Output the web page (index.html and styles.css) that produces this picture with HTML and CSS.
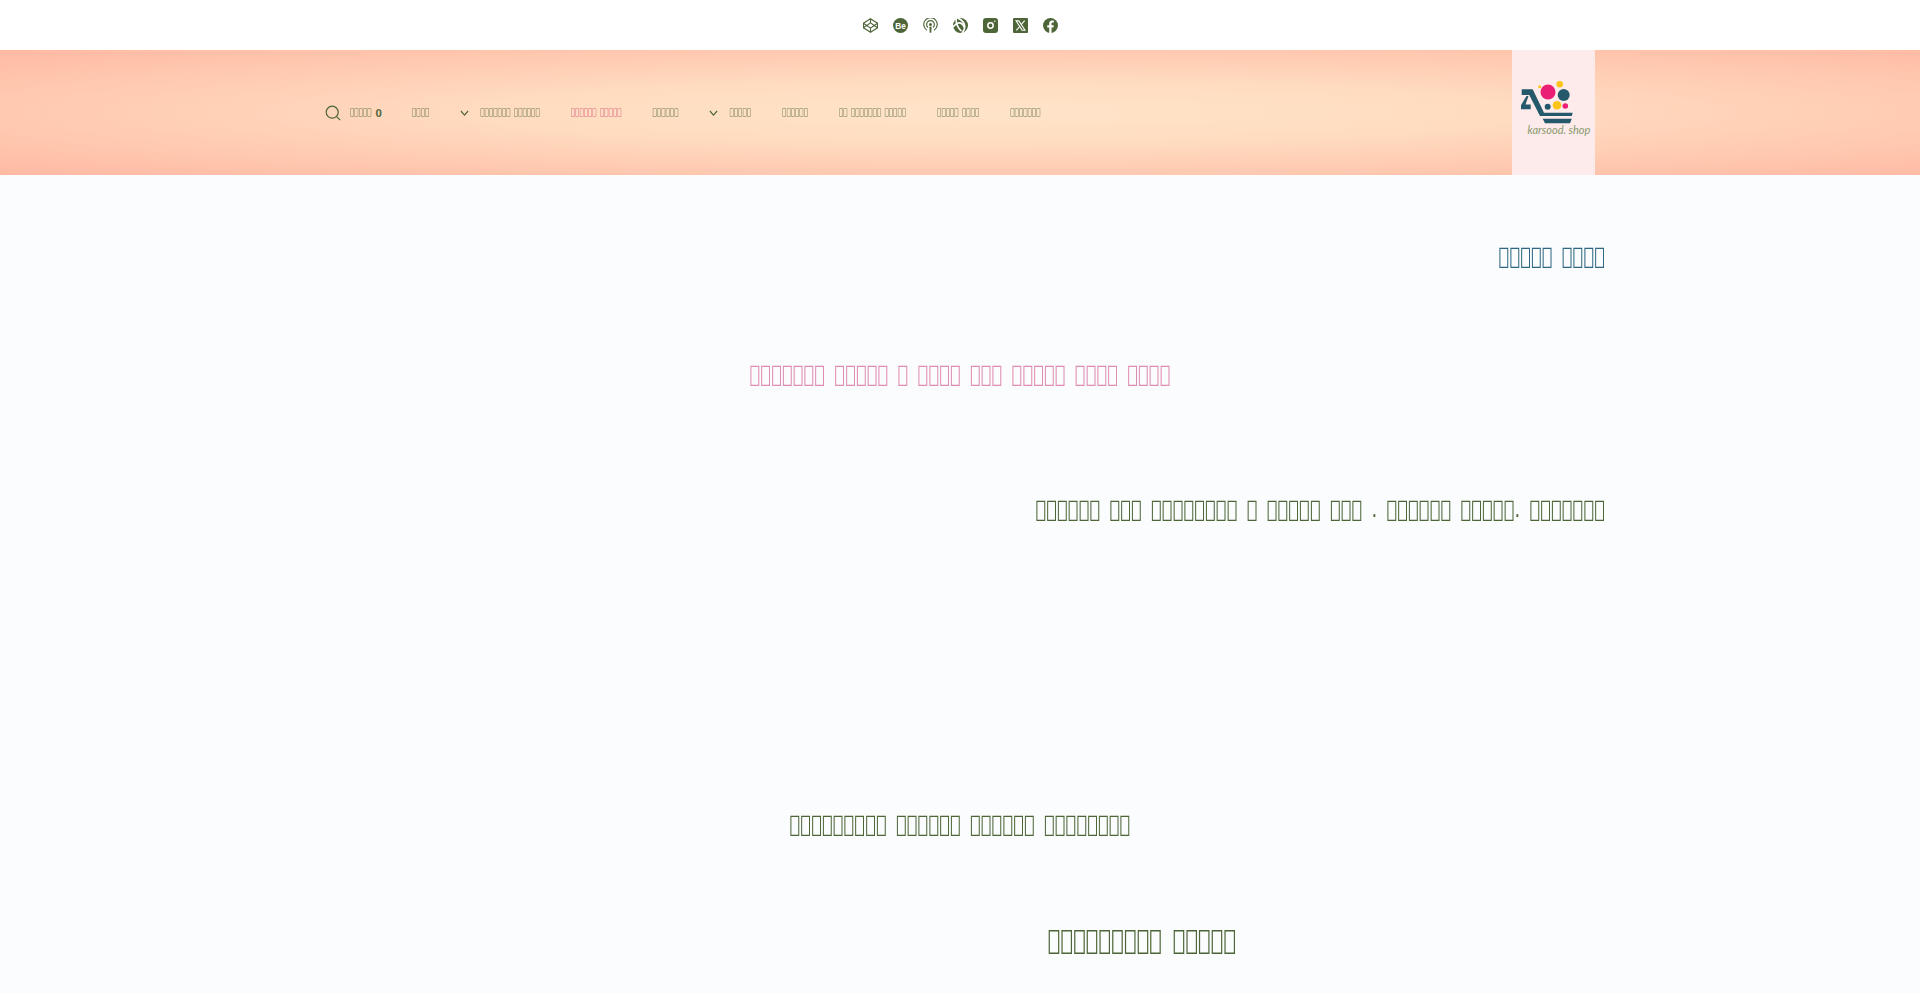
FILE: index.html
```html
<!DOCTYPE html>
<html lang="fa" dir="rtl">
  <head>
    <meta charset="UTF-8" />
    <meta name="viewport" content="width=device-width, initial-scale=1.0" />
    <title>karsood.shop</title>
    <link rel="stylesheet" href="styles.css">
  </head>
  <body>
    <div class="top-bar">
      <a class="social-icon" href="#">
        <svg viewBox="0 0 20 20"><circle cx="10" cy="10" r="10" fill="#4d6537"/><path d="M11.400 20v-7.500h2.500l.5-3h-3V7.700c0-.9.400-1.600 1.700-1.600h1.400V3.500c-.6-.1-1.400-.2-2.200-.2-2.500 0-4 1.500-4 4v2.200H5.700v3h2.600V20z" fill="#fff"/></svg>
      </a>
      <a class="social-icon" href="#">
        <svg viewBox="0 0 20 20"><rect width="20" height="20" rx="1.500" fill="#4d6537"/><path d="M4 3.800h3.800l8.200 12.400h-3.800z" fill="none" stroke="#fff" stroke-width="1.400"/><path d="M15.500 3.500 10.800 9M9.200 11 4.500 16.500" fill="none" stroke="#fff" stroke-width="1.500"/></svg>
      </a>
      <a class="social-icon" href="#">
        <svg viewBox="0 0 20 20"><rect width="20" height="20" rx="4" fill="#4d6537"/><circle cx="10" cy="10" r="3.600" fill="none" stroke="#fff" stroke-width="2"/><circle cx="15.700" cy="4.300" r="1" fill="#fff"/></svg>
      </a>
      <a class="social-icon" href="#">
        <svg viewBox="0 0 20 20"><circle cx="10" cy="10" r="10" fill="#4d6537"/><g fill="none" stroke="#fff" stroke-width="2.200"><path d="M6 0c3 1 6 3 8 6 2 3 2 6 1 9-.5 1.500-1.500 3-3 5"/><path d="M0 12c3-4 6-6 9-5.500 3 .5 5 3 6 6"/><path d="M4 .5c0 5 1 9 3 12 1 1.500 2.500 3 4 5"/></g></svg>
      </a>
      <a class="social-icon" href="#">
        <svg viewBox="0 0 20 20"><g fill="none" stroke="#4d6537" stroke-width="1.500"><path d="M5.200 16.200a9 9 0 1 1 9.600 0"/><path d="M6.700 12.700a5.200 5.200 0 1 1 6.600 0"/></g><circle cx="10" cy="8.800" r="2" fill="#4d6537"/><path d="M8.500 11.700h3l-.5 8h-2z" fill="#4d6537"/></svg>
      </a>
      <a class="social-icon" href="#">
        <svg viewBox="0 0 20 20"><circle cx="10" cy="10" r="10" fill="#4d6537"/><text x="10" y="14" class="be-mark">Be</text></svg>
      </a>
      <a class="social-icon" href="#">
        <svg viewBox="0 0 20 20"><path d="M10 1 19.500 7v6L10 19 .5 13V7z" fill="none" stroke="#4d6537" stroke-width="1.600" stroke-linejoin="round"/><path d="M10 6.500 15 10l-5 3.500L5 10z" fill="none" stroke="#4d6537" stroke-width="1.500"/><path d="M10 1v5.500M10 13.500V19M.5 7 5 10l-4.500 3M19.500 7 15 10l4.500 3" fill="none" stroke="#4d6537" stroke-width="1.500"/></svg>
      </a>
    </div>

    <header class="site-header">
      <div class="header-inner">
        <a class="logo" href="#">
          <svg viewBox="0 0 83 125">
            <path d="M9.700 39.300h11L32 62.700h28.700l-1 3.300H28L17.300 45H9.700z" fill="#24596b"/>
            <path d="M16.500 46l-3 8.500h5.200v4.800H9v-4l5.500-9.300z" fill="#24596b"/>
            <path d="M30.700 68.700h29l-1.700 4.600H33z" fill="#24596b"/>
            <circle cx="36" cy="42" r="7.500" fill="#e91e74"/>
            <circle cx="51.700" cy="45" r="6" fill="#24596b"/>
            <circle cx="47.700" cy="34.300" r="3.300" fill="#fcc419"/>
            <circle cx="27.700" cy="36.700" r="1.500" fill="#fcc419"/>
            <circle cx="35.700" cy="56.700" r="3" fill="#24596b"/>
            <circle cx="45" cy="55.300" r="4.300" fill="#fcc419"/>
            <circle cx="53.300" cy="56" r="2.800" fill="#e91e74"/>
            <text x="15.500" y="84" class="logo-text">karsood. shop</text>
          </svg>
        </a>

        <div class="header-tools">
          <ul class="main-menu">
            <li>&#xE000;&#xE000;&#xE000;&#xE000;&#xE000;&#xE000;&#xE000;</li>
            <li>&#xE000;&#xE000;&#xE000;&#xE000;&#xE000; &#xE000;&#xE000;&#xE000;&#xE000;</li>
            <li>&#xE000;&#xE000; &#xE000;&#xE000;&#xE000;&#xE000;&#xE000;&#xE000;&#xE000; &#xE000;&#xE000;&#xE000;&#xE000;&#xE000;</li>
            <li>&#xE000;&#xE000;&#xE000;&#xE000;&#xE000;&#xE000;</li>
            <li>&#xE000;&#xE000;&#xE000;&#xE000;&#xE000;<svg class="chevron" viewBox="0 0 10 6"><path d="M1 1l4 4 4-4" fill="none" stroke="#4d6537" stroke-width="1.300"/></svg></li>
            <li>&#xE000;&#xE000;&#xE000;&#xE000;&#xE000;&#xE000;</li>
            <li class="current">&#xE000;&#xE000;&#xE000;&#xE000;&#xE000;&#xE000; &#xE000;&#xE000;&#xE000;&#xE000;&#xE000;</li>
            <li>&#xE000;&#xE000;&#xE000;&#xE000;&#xE000;&#xE000;&#xE000; &#xE000;&#xE000;&#xE000;&#xE000;&#xE000;&#xE000;<svg class="chevron" viewBox="0 0 10 6"><path d="M1 1l4 4 4-4" fill="none" stroke="#4d6537" stroke-width="1.300"/></svg></li>
            <li>&#xE000;&#xE000;&#xE000;&#xE000;</li>
          </ul>
          <a class="cart" href="#"><b>0</b><span>&#xE000;&#xE000;&#xE000;&#xE000;&#xE000;</span></a>
          <svg class="search-icon" viewBox="0 0 20 20"><circle cx="9" cy="9" r="7.500" fill="none" stroke="#4d6537" stroke-width="1.500"/><path d="M14.500 14.500 19 19" stroke="#4d6537" stroke-width="1.500"/></svg>
        </div>
      </div>
    </header>

    <main class="content">
      <h2 class="page-title">&#xE000;&#xE000;&#xE000;&#xE000;&#xE000; &#xE000;&#xE000;&#xE000;&#xE000;</h2>
      <h3 class="pink-line">&#xE000;&#xE000;&#xE000;&#xE000;&#xE000;&#xE000;&#xE000; &#xE000;&#xE000;&#xE000;&#xE000;&#xE000; &#xE000; &#xE000;&#xE000;&#xE000;&#xE000; &#xE000;&#xE000;&#xE000; &#xE000;&#xE000;&#xE000;&#xE000;&#xE000; &#xE000;&#xE000;&#xE000;&#xE000; &#xE000;&#xE000;&#xE000;&#xE000;</h3>
      <p class="intro">&#xE000;&#xE000;&#xE000;&#xE000;&#xE000;&#xE000; &#xE000;&#xE000;&#xE000; &#xE000;&#xE000;&#xE000;&#xE000;&#xE000;&#xE000;&#xE000;&#xE000; &#xE000; &#xE000;&#xE000;&#xE000;&#xE000;&#xE000; &#xE000;&#xE000;&#xE000; . &#xE000;&#xE000;&#xE000;&#xE000;&#xE000;&#xE000; &#xE000;&#xE000;&#xE000;&#xE000;&#xE000;. &#xE000;&#xE000;&#xE000;&#xE000;&#xE000;&#xE000;&#xE000;</p>
      <p class="section-line">&#xE000;&#xE000;&#xE000;&#xE000;&#xE000;&#xE000;&#xE000;&#xE000;&#xE000; &#xE000;&#xE000;&#xE000;&#xE000;&#xE000;&#xE000; &#xE000;&#xE000;&#xE000;&#xE000;&#xE000;&#xE000; &#xE000;&#xE000;&#xE000;&#xE000;&#xE000;&#xE000;&#xE000;&#xE000;</p>
      <div class="two-col">
        <h3 class="col-title">&#xE000;&#xE000;&#xE000;&#xE000;&#xE000;&#xE000;&#xE000;&#xE000;&#xE000; &#xE000;&#xE000;&#xE000;&#xE000;&#xE000;</h3>
        <div></div>
      </div>
    </main>
  </body>
</html>
```

FILE: styles.css
```css
* {
  margin: 0;
  padding: 0;
  box-sizing: border-box;
}

body {
  background: #fbfcfe;
  color: #4d6537;
  font-family: "DejaVu Sans Condensed", "DejaVu Sans", sans-serif;
  font-stretch: condensed;
}

a {
  color: inherit;
  text-decoration: none;
}

.top-bar {
  height: 50px;
  background: #fff;
  display: flex;
  justify-content: center;
  align-items: center;
  gap: 15px;
}

.social-icon {
  display: block;
  width: 15px;
  height: 15px;
}

.social-icon svg {
  display: block;
  width: 100%;
  height: 100%;
}

.be-mark {
  fill: #fff;
  font-family: "Liberation Sans", sans-serif;
  font-size: 11px;
  font-weight: 700;
  text-anchor: middle;
  direction: ltr;
}

.site-header {
  height: 125px;
  background: radial-gradient(ellipse at 52% 50%, #ffe4c9 0%, #ffdcc0 35%, #ffb9a3 100%);
}

.header-inner {
  width: 1290px;
  height: 100%;
  margin: 0 auto;
  padding: 0 10px;
  display: flex;
  justify-content: space-between;
  align-items: center;
}

.logo {
  display: block;
  width: 83px;
  height: 125px;
  background: #fdeaea;
}

.logo svg {
  display: block;
  width: 83px;
  height: 125px;
}

.logo-text {
  fill: #8a9a6f;
  font-family: Lato, sans-serif;
  font-size: 11px;
  font-style: italic;
  direction: ltr;
}

.header-tools {
  display: flex;
  align-items: center;
}

.main-menu {
  list-style: none;
  display: flex;
  align-items: center;
  gap: 31px;
  margin-bottom: 1px;
  font-size: 8px;
  word-spacing: 1px;
  color: #6b7a50;
  transform: scaleY(1.150);
  will-change: transform;
}

.main-menu li {
  display: flex;
  align-items: center;
  gap: 11px;
}

.main-menu .current {
  color: #d9677f;
}

.chevron {
  width: 9px;
  height: 6px;
}

.cart {
  display: flex;
  align-items: center;
  gap: 4px;
  margin-right: 30px;
  font-size: 8px;
  color: #6b7a50;
}

.cart span {
  transform: scaleY(1.150);
  will-change: transform;
}

.cart b {
  font-family: "Noto Sans", sans-serif;
  font-size: 11px;
  color: #5a6b42;
}

.search-icon {
  width: 16px;
  height: 16px;
  margin-right: 9px;
}

.content {
  width: 1290px;
  margin: 0 auto;
  padding-top: 66px;
}

.page-title,
.pink-line,
.intro,
.section-line,
.col-title {
  font-size: 20px;
  font-weight: 400;
  line-height: 30px;
  word-spacing: 3.500px;
  transform: scaleY(1.150);
  will-change: transform;
}

.page-title {
  color: #2f6882;
}

.pink-line {
  margin-top: 88px;
  color: #e08db3;
  text-align: center;
}

.intro {
  margin-top: 105px;
}

.section-line {
  margin-top: 285px;
  text-align: center;
}

.two-col {
  margin-top: 86px;
  display: grid;
  grid-template-columns: 926px 1fr;
}

.col-title {
  font-size: 23.500px;
  word-spacing: 4px;
  text-align: center;
}
```
